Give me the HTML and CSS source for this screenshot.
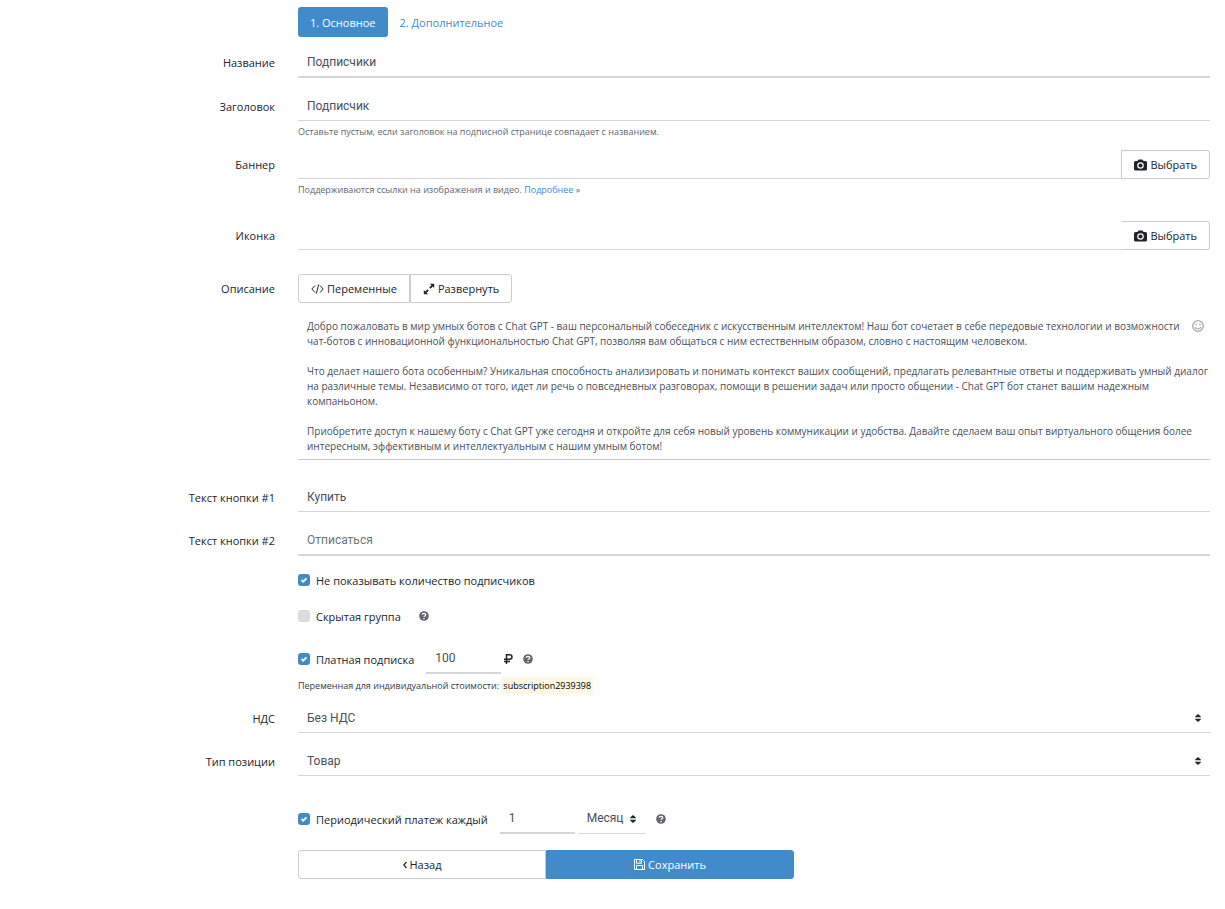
FILE: index.html
```
<!DOCTYPE html>
<html lang="ru">
<head>
<meta charset="utf-8">
<title>Подписчики</title>
<meta name="viewport" content="width=device-width, initial-scale=1">
<link rel="stylesheet" href="styles.css">
</head>
<body>
<svg class="sprite" aria-hidden="true">
  <symbol id="camera" viewBox="0 0 13 12"><path fill-rule="evenodd" d="M1.500 2H3.500L4.300.8Q4.500.5 5 .5H8Q8.500.5 8.700.8L9.500 2H11.500Q13 2 13 3.500V10Q13 11.500 11.500 11.500H1.500Q0 11.500 0 10V3.500Q0 2 1.500 2ZM6.500 3.200a3.300 3.300 0 1 0 0 6.600a3.300 3.300 0 1 0 0-6.600ZM6.500 4.400a2.100 2.100 0 1 1 0 4.200a2.100 2.100 0 1 1 0-4.200Z"/></symbol>
  <symbol id="code" viewBox="0 0 13 10"><path fill="none" stroke="currentColor" d="M4 1.500L.8 5L4 8.500M9 1.500L12.200 5L9 8.500M7.600.5L5.400 9.500"/></symbol>
  <symbol id="expand" viewBox="0 0 12 12"><path d="M7 .8h4.200V5L9.800 3.600 7.600 5.800 6.200 4.400 8.400 2.200zM5 11.200H.8V7L2.200 8.400 4.400 6.200 5.800 7.600 3.600 9.800z"/></symbol>
  <symbol id="help" viewBox="0 0 10 10"><circle cx="5" cy="5" r="4.800"/><path fill="none" stroke="#fff" stroke-width="1.300" d="M3.200 3.800Q3.300 2.300 5 2.300Q6.700 2.300 6.700 3.700Q6.700 4.600 5.700 5Q5 5.300 5 6.100M5 6.900V8.200"/></symbol>
  <symbol id="ruble" viewBox="0 0 9 10"><path fill="none" stroke="currentColor" stroke-width="1.500" d="M2.500 10V.8H5.500Q8 .8 8 3T5.500 5.300H0M0 7.500H6"/></symbol>
  <symbol id="smile" viewBox="0 0 12 12"><circle cx="6" cy="6" r="5.300" fill="none" stroke="currentColor" stroke-width="1.300"/><path fill="none" stroke="currentColor" stroke-width="1.200" d="M3 7Q3.700 9 6 9T9 7"/><circle cx="4.200" cy="4.300" r=".9"/><circle cx="7.800" cy="4.300" r=".9"/></symbol>
  <symbol id="sort" viewBox="0 0 6 8"><path d="M0 3.300Q0 2.700 .5 2.300L3 0L5.500 2.300Q6 2.700 6 3.300ZM0 4.700Q0 5.300 .5 5.700L3 8L5.500 5.700Q6 5.300 6 4.700Z"/></symbol>
  <symbol id="save" viewBox="0 0 11 11"><path fill="none" stroke="currentColor" d="M.5.5H8.500L10.500 2.500V10.500H.5ZM2.500 10.500V6.500H8.500V10.500M2.500.5V4.200H7.500V.5M6 1V3.500"/></symbol>
  <symbol id="back" viewBox="0 0 4 8"><path fill="none" stroke="currentColor" stroke-width="1.200" d="M3.500 1L.8 4L3.500 7"/></symbol>
</svg>
<form class="form">
  <nav class="tabs">
    <a class="tab tab-active" href="#main">1. Основное</a>
    <a class="tab" href="#extra">2. Дополнительное</a>
  </nav>

  <div class="row">
    <label class="label" for="name">Название</label>
    <input class="field field-thick" id="name" type="text" value="Подписчики">
  </div>

  <div class="row row-hinted">
    <label class="label" for="title">Заголовок</label>
    <div>
      <input class="field" id="title" type="text" value="Подписчик">
      <p class="hint">Оставьте пустым, если заголовок на подписной странице совпадает с названием.</p>
    </div>
  </div>

  <div class="row row-wide">
    <label class="label" for="banner">Баннер</label>
    <div>
      <div class="group">
        <input class="field" id="banner" type="text">
        <button class="btn btn-right" type="button"><svg class="i-camera"><use href="#camera"/></svg>Выбрать</button>
      </div>
      <p class="hint">Поддерживаются ссылки на изображения и видео. <a class="link" href="#more">Подробнее</a> »</p>
    </div>
  </div>

  <div class="row row-wide">
    <label class="label" for="icon">Иконка</label>
    <div class="group">
      <input class="field" id="icon" type="text">
      <button class="btn btn-right btn-open" type="button"><svg class="i-camera"><use href="#camera"/></svg>Выбрать</button>
    </div>
  </div>

  <div class="row row-about">
    <label class="label" for="about">Описание</label>
    <div>
      <div class="group">
        <button class="btn btn-left" type="button"><svg class="i-code"><use href="#code"/></svg>Переменные</button>
        <button class="btn btn-right" type="button"><svg class="i-expand"><use href="#expand"/></svg>Развернуть</button>
      </div>
      <div class="editor">
        <textarea class="area" id="about" rows="9">Добро пожаловать в мир умных ботов с Chat GPT - ваш персональный собеседник с искусственным интеллектом! Наш бот сочетает в себе передовые технологии и возможности
чат-ботов с инновационной функциональностью Chat GPT, позволяя вам общаться с ним естественным образом, словно с настоящим человеком.

Что делает нашего бота особенным? Уникальная способность анализировать и понимать контекст ваших сообщений, предлагать релевантные ответы и поддерживать умный диалог
на различные темы. Независимо от того, идет ли речь о повседневных разговорах, помощи в решении задач или просто общении - Chat GPT бот станет вашим надежным
компаньоном.

Приобретите доступ к нашему боту с Chat GPT уже сегодня и откройте для себя новый уровень коммуникации и удобства. Давайте сделаем ваш опыт виртуального общения более
интересным, эффективным и интеллектуальным с нашим умным ботом!</textarea>
        <button class="emoji" type="button" aria-label="Эмодзи"><svg class="i-smile"><use href="#smile"/></svg></button>
      </div>
    </div>
  </div>

  <div class="row">
    <label class="label" for="btn1">Текст кнопки #1</label>
    <input class="field" id="btn1" type="text" value="Купить">
  </div>

  <div class="row row-last">
    <label class="label" for="btn2">Текст кнопки #2</label>
    <input class="field field-thick" id="btn2" type="text" placeholder="Отписаться">
  </div>

  <div class="options">
    <div class="option">
      <label class="check"><input class="box" type="checkbox" checked>Не показывать количество подписчиков</label>
    </div>
    <div class="option">
      <label class="check"><input class="box" type="checkbox">Скрытая группа</label>
      <svg class="i-help i-help-far"><use href="#help"/></svg>
    </div>
    <div class="option option-price">
      <label class="check"><input class="box" type="checkbox" checked>Платная подписка</label>
      <input class="field field-thick field-short" type="text" value="100" aria-label="Стоимость">
      <svg class="i-ruble"><use href="#ruble"/></svg>
      <svg class="i-help"><use href="#help"/></svg>
    </div>
    <p class="hint hint-dark">Переменная для индивидуальной стоимости: <code class="code">subscription2939398</code></p>
  </div>

  <div class="row">
    <label class="label" for="vat">НДС</label>
    <div class="pick">
      <select class="field" id="vat"><option>Без НДС</option></select>
      <svg class="i-sort"><use href="#sort"/></svg>
    </div>
  </div>

  <div class="row">
    <label class="label" for="kind">Тип позиции</label>
    <div class="pick">
      <select class="field" id="kind"><option>Товар</option></select>
      <svg class="i-sort"><use href="#sort"/></svg>
    </div>
  </div>

  <div class="footer">
    <div class="option">
      <label class="check"><input class="box" type="checkbox" checked>Периодический платеж каждый</label>
      <input class="field field-thick field-short" type="text" value="1" aria-label="Количество">
      <div class="pick pick-short">
        <select class="field" aria-label="Период"><option>Месяц</option></select>
        <svg class="i-sort"><use href="#sort"/></svg>
      </div>
      <svg class="i-help i-help-period"><use href="#help"/></svg>
    </div>
    <div class="actions">
      <button class="btn btn-left" type="button"><svg class="i-back"><use href="#back"/></svg>Назад</button>
      <button class="btn btn-right btn-primary" type="submit"><svg class="i-save"><use href="#save"/></svg>Сохранить</button>
    </div>
  </div>
</form>
</body>
</html>
```
FILE: styles.css
```
* { box-sizing: border-box; }
body {
  margin: 0;
  background: #fff;
  color: #212529;
  font: 11px/17px "Open Sans", "Noto Sans", sans-serif;
}
svg { display: block; flex: none; fill: currentColor; }
.sprite { position: absolute; width: 0; height: 0; }
.form { padding: 7px 15px 30px 0; }

.tabs { display: flex; margin: 0 0 11px 298px; }
.tab {
  padding: 7px 12px 6px;
  border-radius: 3px;
  color: #428bca;
  text-decoration: none;
}
.tab-active { background: #428bca; color: #fff; }

.row {
  display: grid;
  grid-template-columns: 275px minmax(0, 1fr);
  column-gap: 23px;
  align-items: start;
  margin-bottom: 14px;
}
.row-hinted { margin-bottom: 11px; }
.row-wide { margin-bottom: 24px; }
.row-about { margin-bottom: 23px; }
.row-last { margin-bottom: 6px; }
.label { padding-top: 6px; text-align: right; }

.field {
  display: block;
  width: 100%;
  height: 29px;
  margin: 0;
  padding: 0 9px;
  border: 0;
  border-bottom: 1px solid #d6d6d6;
  border-radius: 0;
  outline: 0;
  background: transparent;
  color: #495057;
  font: 12px/17px Roboto, sans-serif;
  appearance: none;
}
.field-thick { height: 30px; border-bottom-width: 2px; }
.field::placeholder { color: #6c757d; opacity: 1; }
.hint { margin: 3px 0 0; color: #5f676f; font-size: 9px; line-height: 15px; }
.hint-dark { margin-top: 1px; color: #343a40; }
.link { color: #428bca; text-decoration: none; }
.code { padding: 2px; background: #fcf8e3; color: #000; font: inherit; }

.group { display: flex; }
.btn {
  display: flex;
  flex: none;
  align-items: center;
  justify-content: center;
  gap: 3px;
  height: 29px;
  margin: 0;
  padding: 0 12px;
  border: 1px solid #ccc;
  background: #fff;
  color: #212529;
  font: 11px/17px "Open Sans", "Noto Sans", sans-serif;
}
.btn-left { border-radius: 3px 0 0 3px; }
.btn-right { border-radius: 0 3px 3px 0; }
.btn-open { border-left-color: transparent; }
.btn-primary { border-color: #428bca; background: #428bca; color: #fff; }

.editor { position: relative; margin-top: 10px; }
.area {
  display: block;
  width: 100%;
  height: 147px;
  margin: 0;
  padding: 6px 0 5px 9px;
  border: 0;
  border-bottom: 1px solid #ccc;
  outline: 0;
  resize: none;
  overflow: hidden;
  background: transparent;
  color: #495057;
  font: 10px/15px "Open Sans", "Noto Sans", sans-serif;
}
.emoji {
  position: absolute;
  top: 7px;
  right: 6px;
  padding: 0;
  border: 0;
  background: none;
  color: #aaa;
}

.options { margin: 0 0 11px 298px; }
.option { display: flex; align-items: center; min-height: 36px; }
.option-price { margin-top: 7px; }
.check { display: flex; align-items: center; gap: 6px; margin-right: 12px; }
.box {
  width: 12px;
  height: 12px;
  margin: 0;
  border-radius: 3px;
  background: #ddd;
  appearance: none;
}
.box:checked {
  background: #428bca url("data:image/svg+xml,%3Csvg xmlns='http://www.w3.org/2000/svg' viewBox='0 0 12 12'%3E%3Cpath d='M3.500 6L5.200 7.700L8.500 4.300' fill='none' stroke='white' stroke-width='1.800'/%3E%3C/svg%3E");
}
.field-short { width: 75px; }

.pick { position: relative; }
.pick .i-sort { position: absolute; top: 10px; right: 9px; pointer-events: none; }
.pick-short { width: 67px; margin-left: 3px; }

.footer { margin: 0 0 0 298px; padding-top: 11px; }
.actions {
  display: grid;
  grid-template-columns: 1fr 1fr;
  max-width: 496px;
  margin-top: 13px;
}
.i-camera { width: 13px; height: 12px; }
.i-code { width: 13px; height: 10px; }
.i-expand { width: 12px; height: 12px; }
.i-help { width: 10px; height: 10px; color: #5f666d; }
.i-help-far { margin-left: 6px; }
.i-help-period { margin-left: 11px; }
.i-ruble { width: 9px; height: 10px; margin: 0 10px 0 3px; }
.i-smile { width: 12px; height: 12px; }
.i-sort { width: 6px; height: 8px; }
.i-save { width: 11px; height: 11px; }
.i-back { width: 4px; height: 8px; }
```
